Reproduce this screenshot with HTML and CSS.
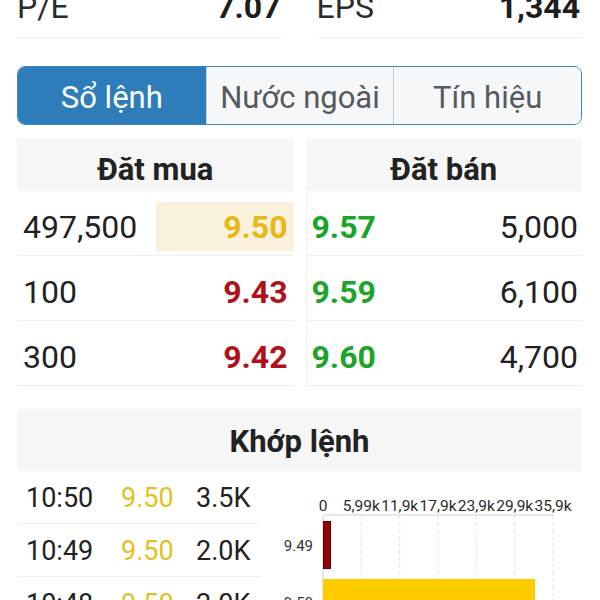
FILE: index.html
```
<!DOCTYPE html>
<html lang="vi">
<head>
<meta charset="utf-8">
<title>Sổ lệnh</title>
<link rel="stylesheet" href="styles.css">
</head>
<body>
<main class="page">
  <section class="stats">
    <div class="stat"><span class="stat-label">P/E</span><span class="stat-value">7.07</span></div>
    <div class="stat"><span class="stat-label">EPS</span><span class="stat-value">1,344</span></div>
  </section>

  <nav class="tabs">
    <div class="tab active">Sổ lệnh</div>
    <div class="tab">Nước ngoài</div>
    <div class="tab">Tín hiệu</div>
  </nav>

  <section class="book">
    <div class="side buy">
      <div class="side-head">Đăt mua</div>
      <div class="row"><span class="qty">497,500</span><span class="price ref hl">9.50</span></div>
      <div class="row"><span class="qty">100</span><span class="price down">9.43</span></div>
      <div class="row"><span class="qty">300</span><span class="price down">9.42</span></div>
    </div>
    <div class="side sell">
      <div class="side-head">Đăt bán</div>
      <div class="row"><span class="price up">9.57</span><span class="qty">5,000</span></div>
      <div class="row"><span class="price up">9.59</span><span class="qty">6,100</span></div>
      <div class="row"><span class="price up">9.60</span><span class="qty">4,700</span></div>
    </div>
  </section>

  <section class="match">
    <div class="match-head">Khớp lệnh</div>
    <div class="match-body">
      <div class="ticks">
        <div class="tick"><span>10:50</span><span class="tp">9.50</span><span>3.5K</span></div>
        <div class="tick"><span>10:49</span><span class="tp">9.50</span><span>2.0K</span></div>
        <div class="tick"><span>10:48</span><span class="tp">9.50</span><span>2.0K</span></div>
      </div>
      <svg class="chart" width="322" height="150" viewBox="0 0 322 150">
        <g class="grid">
          <line x1="101.3" y1="44" x2="101.3" y2="150"/>
          <line x1="139.7" y1="44" x2="139.7" y2="150"/>
          <line x1="178" y1="44" x2="178" y2="150"/>
          <line x1="216.3" y1="44" x2="216.3" y2="150"/>
          <line x1="254.7" y1="44" x2="254.7" y2="150"/>
          <line x1="293" y1="44" x2="293" y2="150"/>
        </g>
        <line class="axis" x1="63" y1="44" x2="293" y2="44"/>
        <line class="axis" x1="63" y1="44" x2="63" y2="150"/>
        <g class="xlab">
          <text x="63" y="40">0</text>
          <text x="101.3" y="40">5,99k</text>
          <text x="139.7" y="40">11,9k</text>
          <text x="178" y="40">17,9k</text>
          <text x="216.3" y="40">23,9k</text>
          <text x="254.7" y="40">29,9k</text>
          <text x="293" y="40">35,9k</text>
        </g>
        <rect class="bar-down" x="63.5" y="50.5" width="7" height="47"/>
        <rect class="bar-ref" x="63" y="108" width="212" height="42"/>
        <g class="ylab">
          <text x="53" y="80">9.49</text>
          <text x="53" y="137">9.50</text>
        </g>
      </svg>
    </div>
  </section>
</main>
</body>
</html>
```

FILE: styles.css
```
* { box-sizing: border-box; }

html, body {
  margin: 0;
  padding: 0;
  background: #ffffff;
}

body {
  font-family: Roboto, "Noto Sans", "Liberation Sans", sans-serif;
  color: #212121;
  overflow: hidden;
}

.page {
  padding: 0 18px 0 17px;
}

/* stats */
.stats {
  display: grid;
  grid-template-columns: 1fr 1fr;
  gap: 34px;
  margin-top: -13px;
}

.stat {
  height: 51px;
  display: flex;
  justify-content: space-between;
  align-items: flex-start;
  line-height: 40px;
  font-size: 32px;
  border-bottom: 1px solid #efefef;
  padding-right: 2px;
}

.stat-label { color: #2b2b2b; }
.stat-value { font-weight: 700; color: #1e1e1e; }

/* tabs */
.tabs {
  display: grid;
  grid-template-columns: repeat(3, 1fr);
  height: 59px;
  margin-top: 28px;
  border: 1.5px solid #3b86c1;
  border-radius: 8px;
  overflow: hidden;
}

.tab {
  display: flex;
  align-items: center;
  justify-content: center;
  font-size: 31px;
  color: #555a5e;
  background: #f5f7f9;
  border-left: 1px solid #c9d0d6;
  padding-top: 3px;
}

.tab.active {
  background: #2e7dbb;
  color: #ffffff;
  border-left: none;
}

/* order book */
.book {
  display: grid;
  grid-template-columns: 1fr 1fr;
  gap: 12px;
  margin-top: 13px;
}

.side-head {
  height: 53px;
  background: #f6f6f6;
  display: flex;
  align-items: center;
  justify-content: center;
  font-size: 31px;
  font-weight: 700;
  color: #222;
  padding-top: 10px;
}

.row {
  height: 65px;
  display: flex;
  align-items: center;
  justify-content: space-between;
  border-bottom: 1px solid #eeeeee;
  font-size: 32px;
  padding-top: 7px;
}

.buy .row { padding-left: 6px; }
.sell .row {
  padding: 7px 4px 0 5px;
  border-left: 1px solid #f1f1f1;
}

.qty { color: #222; }

.price { font-weight: 700; }

.buy .price {
  width: 138px;
  height: 49px;
  display: flex;
  align-items: center;
  justify-content: flex-end;
  padding-right: 6px;
}

.price.hl { background: #f9f1dc; }
.price.ref { color: #e7b815; }
.price.down { color: #b0121c; }
.price.up { color: #1ba42a; }

/* matched orders */
.match { margin-top: 23px; }

.match-head {
  height: 62px;
  background: #f6f6f6;
  display: flex;
  align-items: center;
  justify-content: center;
  font-size: 31px;
  font-weight: 700;
  color: #222;
  padding-top: 2px;
}

.match-body {
  display: flex;
  align-items: flex-start;
}

.ticks { width: 243px; flex: none; }

.tick {
  height: 53px;
  display: grid;
  grid-template-columns: 95px 75px auto;
  align-items: center;
  padding-left: 8px;
  padding-top: 2px;
  font-size: 27px;
  color: #222;
  border-bottom: 1px solid #eeeeee;
  margin-left: 1px;
}

.tick .tp { color: #e4c01e; }

.chart {
  display: block;
  flex: none;
  overflow: visible;
}

.chart .grid line {
  stroke: #e3e3e3;
  stroke-width: 1;
  stroke-dasharray: 4 3;
}

.chart .axis {
  stroke: #cfcfcf;
  stroke-width: 1;
}

.chart .xlab text {
  font-family: Roboto, "Noto Sans", sans-serif;
  font-size: 15.5px;
  fill: #2a2a2a;
  text-anchor: middle;
}

.chart .ylab text {
  font-family: Roboto, "Noto Sans", sans-serif;
  font-size: 15px;
  fill: #333;
  text-anchor: end;
}

.bar-down {
  fill: #8e0505;
  stroke: #5c0000;
  stroke-width: 1;
}

.bar-ref { fill: #ffcc00; }
```
